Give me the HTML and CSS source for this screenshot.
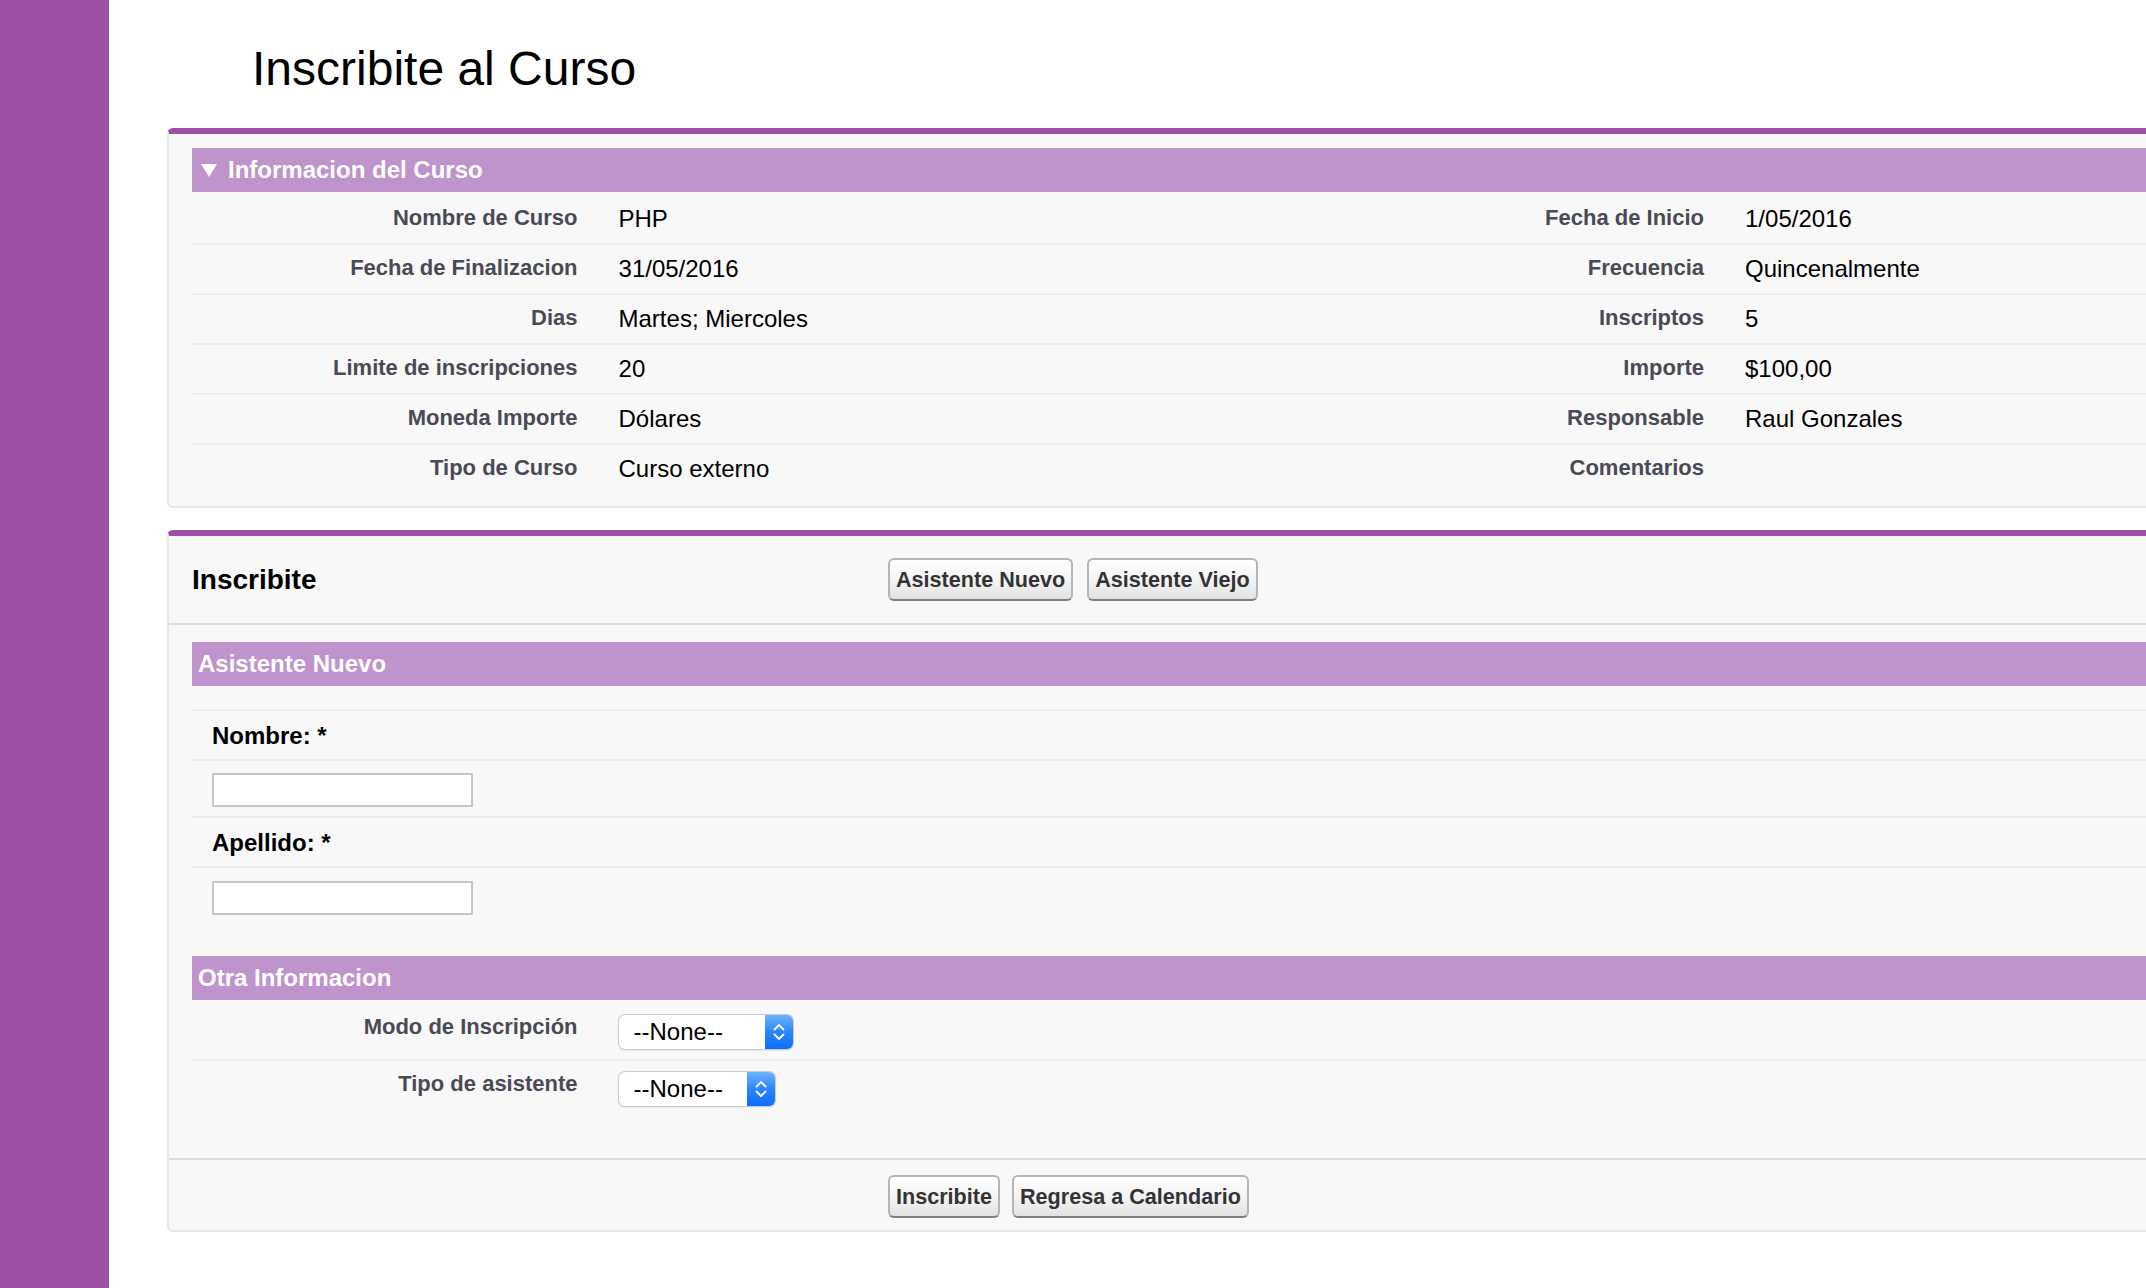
FILE: index.html
```html
<!DOCTYPE html>
<html lang="es">
<head>
<meta charset="utf-8">
<title>Inscribite al Curso</title>
<link rel="stylesheet" href="styles.css">
</head>
<body>
<div class="layout">
  <aside class="sidebar"></aside>
  <main class="main">
    <h1 class="page-title">Inscribite al Curso</h1>

    <section class="card card-info">
      <div class="bar bar-toggle"><span class="tri"></span><span>Informacion del Curso</span></div>
      <div class="detail detail-info">
        <div class="drow">
          <div class="dl">Nombre de Curso</div><div class="dv">PHP</div>
          <div class="dl">Fecha de Inicio</div><div class="dv">1/05/2016</div>
        </div>
        <div class="drow">
          <div class="dl">Fecha de Finalizacion</div><div class="dv">31/05/2016</div>
          <div class="dl">Frecuencia</div><div class="dv">Quincenalmente</div>
        </div>
        <div class="drow">
          <div class="dl">Dias</div><div class="dv">Martes; Miercoles</div>
          <div class="dl">Inscriptos</div><div class="dv">5</div>
        </div>
        <div class="drow">
          <div class="dl">Limite de inscripciones</div><div class="dv">20</div>
          <div class="dl">Importe</div><div class="dv">$100,00</div>
        </div>
        <div class="drow">
          <div class="dl">Moneda Importe</div><div class="dv">Dólares</div>
          <div class="dl">Responsable</div><div class="dv">Raul Gonzales</div>
        </div>
        <div class="drow">
          <div class="dl">Tipo de Curso</div><div class="dv">Curso externo</div>
          <div class="dl">Comentarios</div><div class="dv"></div>
        </div>
      </div>
    </section>

    <section class="card card-form">
      <div class="card-head">
        <h2 class="head-title">Inscribite</h2>
        <div class="btns">
          <button class="btn" type="button">Asistente Nuevo</button>
          <button class="btn" type="button">Asistente Viejo</button>
        </div>
      </div>

      <div class="card-body">
        <div class="bar bar-plain">Asistente Nuevo</div>
        <div class="form-list">
          <div class="frow frow-empty"></div>
          <div class="frow frow-label">Nombre: *</div>
          <div class="frow frow-input"><input class="text-input" type="text"></div>
          <div class="frow frow-label">Apellido: *</div>
          <div class="frow frow-input frow-last"><input class="text-input" type="text"></div>
        </div>

        <div class="bar bar-plain bar-other">Otra Informacion</div>
        <div class="detail detail-other">
          <div class="drow">
            <div class="dl">Modo de Inscripción</div>
            <div class="dv dv-select">
              <div class="select select-wide">
                <span class="select-text">--None--</span>
                <span class="select-arrow"><svg width="12" height="20" viewBox="0 0 12 20"><path d="M1.5 7.5 L6 3 L10.5 7.5 M1.5 12.5 L6 17 L10.5 12.5" fill="none" stroke="#fff" stroke-width="1.8" stroke-linecap="round" stroke-linejoin="round"/></svg></span>
              </div>
            </div>
            <div class="dl"></div><div class="dv"></div>
          </div>
          <div class="drow">
            <div class="dl">Tipo de asistente</div>
            <div class="dv dv-select">
              <div class="select select-narrow">
                <span class="select-text">--None--</span>
                <span class="select-arrow"><svg width="12" height="20" viewBox="0 0 12 20"><path d="M1.5 7.5 L6 3 L10.5 7.5 M1.5 12.5 L6 17 L10.5 12.5" fill="none" stroke="#fff" stroke-width="1.8" stroke-linecap="round" stroke-linejoin="round"/></svg></span>
              </div>
            </div>
            <div class="dl"></div><div class="dv"></div>
          </div>
        </div>
      </div>

      <div class="card-foot">
        <div class="foot-spacer"></div>
        <div class="btns btns-foot">
          <button class="btn" type="button">Inscribite</button>
          <button class="btn" type="button">Regresa a Calendario</button>
        </div>
      </div>
    </section>
  </main>
</div>
</body>
</html>
```

FILE: styles.css
```css
html {
  overflow: hidden;
}

body {
  margin: 0;
  background: #ffffff;
  color: #000000;
  font-family: "Liberation Sans", Arial, Helvetica, sans-serif;
}

.layout {
  display: flex;
  min-height: 100vh;
  width: max-content;
}

.sidebar {
  flex: none;
  width: 109px;
  background: #9c4fa4;
}

.main {
  flex: none;
  padding: 41px 0 0 58px;
}

.page-title {
  margin: 0 0 31px 85px;
  font-size: 48px;
  line-height: 56px;
  font-weight: normal;
  color: #000;
}

/* cards */
.card {
  width: 2303px;
  box-sizing: border-box;
  background: #f8f8f8;
  border: 2px solid #e6e6e6;
  border-top: 6px solid #9c4fa4;
  border-radius: 6px;
}

.card-info {
  padding: 14px 23px 13px;
}

.card-form {
  margin-top: 22px;
}

/* section bars */
.bar {
  display: flex;
  align-items: center;
  height: 44px;
  line-height: 44px;
  background: #bf93cb;
  color: #ffffff;
  font-size: 24px;
  font-weight: bold;
}

.bar-toggle {
  padding-left: 9px;
  gap: 11px;
}

.tri {
  width: 0;
  height: 0;
  border-left: 8.5px solid transparent;
  border-right: 8.5px solid transparent;
  border-top: 13px solid #ffffff;
}

.bar-plain {
  padding-left: 6px;
}

.bar-other {
  margin-top: 32px;
}

/* detail grids */
.detail-info {
  margin-top: 3px;
}

.detail-other {
  margin-top: 4px;
}

.drow {
  display: grid;
  grid-template-columns: 18% 32% 18% 32%;
  border-bottom: 2px solid #ececec;
}

.drow:last-child {
  border-bottom: none;
}

.dl {
  padding: 9px 20px 11px;
  text-align: right;
  font-size: 22px;
  line-height: 28px;
  font-weight: bold;
  color: #4a4a56;
}

.dv {
  padding: 9px 20px 9px 21px;
  font-size: 24px;
  line-height: 30px;
  color: #000;
}

.dv-select {
  padding-top: 11px;
  padding-bottom: 10px;
}

/* header of the form card */
.card-head {
  display: flex;
  align-items: center;
  height: 87px;
  padding-left: 23px;
  border-bottom: 2px solid #dcdcdc;
}

.head-title {
  flex: none;
  width: 696px;
  margin: 0;
  font-size: 28px;
  font-weight: bold;
  color: #000;
}

.btns {
  display: flex;
  gap: 14px;
}

.btns-foot {
  gap: 12px;
}

.btn {
  height: 43px;
  box-sizing: border-box;
  padding: 0 6px;
  border: 2px solid #b5b5b5;
  border-bottom-color: #7f7f7f;
  border-radius: 6px;
  background: linear-gradient(#ffffff, #f4f4f4 50%, #e2e2e2);
  color: #333333;
  font-family: "Liberation Sans", Arial, sans-serif;
  font-size: 21.6px;
  font-weight: bold;
  white-space: nowrap;
}

/* form body */
.card-body {
  padding: 17px 23px 42px;
}

.frow {
  border-bottom: 2px solid #ececec;
  padding-left: 20px;
}

.frow-empty {
  height: 23px;
}

.frow-label {
  padding-top: 10px;
  padding-bottom: 8px;
  font-size: 24px;
  line-height: 30px;
  font-weight: bold;
  color: #000;
}

.frow-input {
  display: flex;
  padding-top: 12px;
  padding-bottom: 9px;
}

.frow-last {
  border-bottom: none;
  padding-top: 13px;
}

.text-input {
  width: 261px;
  height: 34px;
  box-sizing: border-box;
  margin: 0;
  border: 2px solid #c6c6c6;
  background: #ffffff;
}

/* selects */
.select {
  display: flex;
  height: 34px;
  box-sizing: border-box;
  border-radius: 6px;
  background: #ffffff;
  box-shadow: 0 0 0 1px #cbcbcb, 0 1px 2px rgba(0, 0, 0, 0.22);
  overflow: hidden;
}

.select-wide {
  width: 174px;
}

.select-narrow {
  width: 156px;
}

.select-text {
  flex: 1;
  padding-left: 15px;
  font-size: 24px;
  line-height: 34px;
  color: #000;
}

.select-arrow {
  flex: none;
  width: 28px;
  display: flex;
  align-items: center;
  justify-content: center;
  background: linear-gradient(#6ab4fe, #2a86fd 50%, #0a6dfd);
}

/* footer */
.card-foot {
  display: flex;
  padding: 15px 0 12px 23px;
  border-top: 2px solid #dcdcdc;
}

.foot-spacer {
  flex: none;
  width: 696px;
}
```
